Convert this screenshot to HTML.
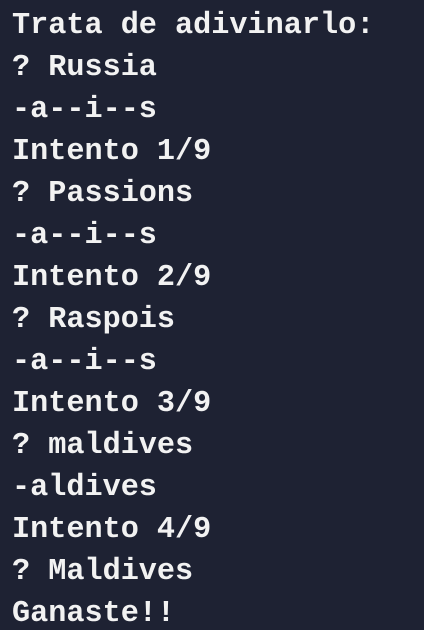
<!DOCTYPE html>
<html><head><style>
html,body{margin:0;padding:0;background:#1e2233;width:424px;height:630px;overflow:hidden}
pre{margin:0;padding:5px 0 0 12px;font-family:"Liberation Mono",monospace;font-weight:bold;font-size:30.2px;line-height:42px;color:#f2f2f2}
</style></head><body><pre>Trata de adivinarlo:
? Russia
-a--i--s
Intento 1/9
? Passions
-a--i--s
Intento 2/9
? Raspois
-a--i--s
Intento 3/9
? maldives
-aldives
Intento 4/9
? Maldives
Ganaste!!</pre></body></html>
